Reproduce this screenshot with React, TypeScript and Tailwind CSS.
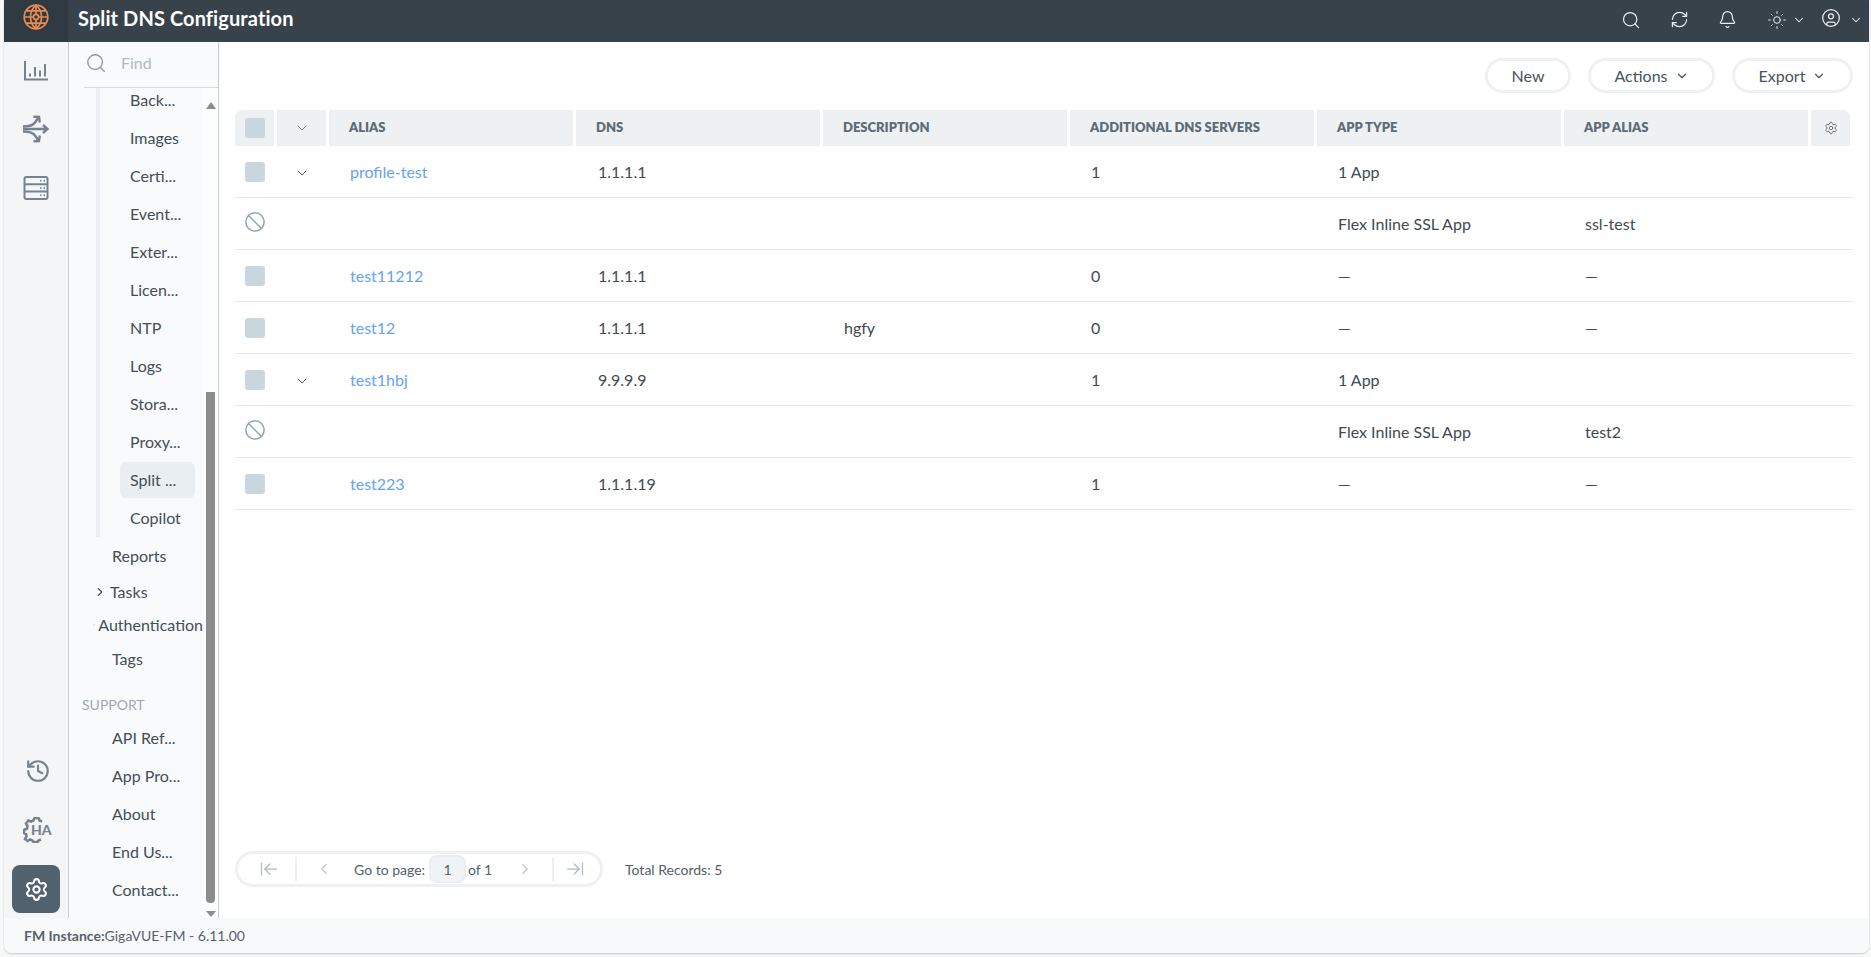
import {
  ArrowLeftToLine,
  ArrowRightToLine,
  Ban,
  Bell,
  ChevronDown,
  ChevronLeft,
  ChevronRight,
  CircleUser,
  History,
  RefreshCw,
  Search,
  Settings,
  Sun,
} from "lucide-react";

const gridCols = "grid grid-cols-[39px_49px_repeat(6,244px)_39px] gap-x-[3px]";

type Row = {
  kind: "row" | "sub";
  expand?: boolean;
  alias?: string;
  dns?: string;
  description?: string;
  servers?: string;
  appType?: string;
  appAlias?: string;
};

const rows: Row[] = [
  { kind: "row", expand: true, alias: "profile-test", dns: "1.1.1.1", servers: "1", appType: "1 App" },
  { kind: "sub", appType: "Flex Inline SSL App", appAlias: "ssl-test" },
  { kind: "row", alias: "test11212", dns: "1.1.1.1", servers: "0", appType: "—", appAlias: "—" },
  { kind: "row", alias: "test12", dns: "1.1.1.1", description: "hgfy", servers: "0", appType: "—", appAlias: "—" },
  { kind: "row", expand: true, alias: "test1hbj", dns: "9.9.9.9", servers: "1", appType: "1 App" },
  { kind: "sub", appType: "Flex Inline SSL App", appAlias: "test2" },
  { kind: "row", alias: "test223", dns: "1.1.1.19", servers: "1", appType: "—", appAlias: "—" },
];

const subItems = ["Back...", "Images", "Certi...", "Event...", "Exter...", "Licen...", "NTP", "Logs", "Stora...", "Proxy...", "Split ...", "Copilot"];
const supportItems = ["API Ref...", "App Pro...", "About", "End Us...", "Contact..."];

function GlobeLogo() {
  return (
    <svg width="26" height="26" viewBox="0 0 26 26" fill="none" stroke="#e98b52" strokeWidth="1.7">
      <circle cx="13" cy="13" r="11.8" />
      <path d="M13 1.2C8.5 5 7.5 9 7.5 13s1 8 5.5 11.8M13 1.2C17.5 5 18.5 9 18.5 13s-1 8-5.5 11.8" />
      <path d="M13 1.2V10M13 16v8.8M1.2 13H10M16 13h8.8M3.2 6.8h19.6M3.2 19.2h19.6" />
      <circle cx="13" cy="13" r="2.6" />
    </svg>
  );
}

function ChartIcon() {
  return (
    <svg width="26" height="22" viewBox="0 0 26 22" fill="none" stroke="#76838f">
      <path d="M2 1v18.5h23" strokeWidth="2" />
      <path d="M7 16.5v-3M12 16.5V7M17 16.5v-6M22 16.5V4" strokeWidth="2" />
    </svg>
  );
}

function RouteIcon() {
  return (
    <svg width="28" height="28" viewBox="0 0 28 28" fill="none" stroke="#76838f" strokeWidth="2.4">
      <path d="M1 14h24M21 10l4.5 4-4.5 4" />
      <path d="M1 11.5c7 0 10-1 12-4l3.5-5M11.5 1.8l5.5.2.8 5.5" />
      <path d="M1 16.500c7 0 10 1 12 4l3.500 5M11.500 26.200l5.500-.2.800-5.500" />
    </svg>
  );
}

function ServerIcon() {
  return (
    <svg width="26" height="24" viewBox="0 0 26 24" fill="none" stroke="#76838f" strokeWidth="2">
      <rect x="1.500" y="1" width="23" height="22" rx="2" />
      <path d="M1.500 8.300h23M1.500 15.600h23" />
      <path d="M17 4.700h1.500M20.500 4.700H22M17 12h1.500M20.500 12H22M17 19.300h1.500M20.500 19.300H22" strokeWidth="1.500" />
    </svg>
  );
}

function HaIcon() {
  return (
    <div className="relative w-[28px] h-[26px]">
      <svg width="26" height="26" viewBox="0 0 26 26" fill="none" stroke="#76838f" strokeWidth="2.600">
        <path d="M19 4.500l-2.500-1-1-2.500h-4l-1 2.500-2.500 1-2.500-1-2.500 3 1.500 2.500-.5 2.500L1 13v3l2 1 .5 2.500L2 22l2.500 2 2.500-1.500 2.500 1 1 1.500h4l1-1.500 2.500-1" />
      </svg>
      <span className="absolute left-[8px] top-[6px] text-[14px] leading-[14px] font-black text-[#76838f]">HA</span>
    </div>
  );
}

function TopBar() {
  return (
    <header className="flex h-[42px] shrink-0 items-center bg-[#37424a] text-[#e9edf0]">
      <div className="flex h-full w-[64px] items-start justify-center bg-[#2f3a42] pt-[4px]">
        <GlobeLogo />
      </div>
      <div className="pb-[6px] pl-[10px] text-[20px] font-bold tracking-[0.1px] text-white">Split DNS Configuration</div>
      <div className="ml-auto flex items-center pb-[3px]">
        <Search size={20} strokeWidth={1.500} className="mr-[29px]" />
        <RefreshCw size={19} strokeWidth={1.500} className="mr-[29px]" />
        <Bell size={19} strokeWidth={1.500} className="mr-[30px]" />
        <Sun size={20} strokeWidth={1.200} />
        <ChevronDown size={14} strokeWidth={1.800} className="ml-[5px] mr-[15px]" />
        <CircleUser size={20} strokeWidth={1.500} className="mb-[3px]" />
        <ChevronDown size={14} strokeWidth={1.800} className="ml-[8px] mr-[6px]" />
      </div>
    </header>
  );
}

function Rail() {
  return (
    <aside className="flex w-[65px] shrink-0 flex-col items-center border-r border-[#c9cccf] bg-[#f4f5f7]">
      <div className="flex h-[58px] w-full items-center justify-center"><ChartIcon /></div>
      <div className="flex h-[58px] w-full items-center justify-center"><RouteIcon /></div>
      <div className="flex h-[60px] w-full items-center justify-center"><ServerIcon /></div>
      <div className="mt-auto flex w-full flex-col items-center pb-[5px]">
        <div className="flex h-[59px] w-full items-center justify-center pl-[3px]">
          <History size={26} strokeWidth={2} className="text-[#76838f]" />
        </div>
        <div className="flex h-[59px] w-full items-center justify-center pl-[2px]"><HaIcon /></div>
        <div className="mt-[6px] flex h-[48px] w-[48px] items-center justify-center rounded-[8px] bg-[#52616e]">
          <Settings size={25} strokeWidth={2} className="text-white" />
        </div>
      </div>
    </aside>
  );
}

function NavPanel() {
  return (
    <nav className="flex w-[150px] shrink-0 flex-col border-r border-[#c9cccf] bg-[#f9fafc] text-[16px] text-[#434e57]">
      <div className="ml-[15px] flex h-[46px] shrink-0 items-center border-b border-[#d5d9dc] pb-[3px]">
        <Search size={22} strokeWidth={1.500} className="ml-[1px] text-[#8b9ba8]" />
        <span className="ml-[14px] text-[#aebac4]">Find</span>
      </div>
      <div className="flex min-h-0 flex-1">
        <div className="min-w-0 flex-1 overflow-hidden">
          <div className="-mt-[7px]">
            <div className="ml-[27px] border-l-4 border-[#e9eef2]">
              {subItems.map((label) => (
                <div key={label} className="flex h-[38px] items-center pl-[20px]">
                  <div className={`flex h-[36px] w-[75px] items-center rounded-[6px] pl-[10px] ${label === "Split ..." ? "bg-[#e9eef2]" : ""}`}>
                    {label}
                  </div>
                </div>
              ))}
            </div>
            <div className="flex h-[38px] items-center pl-[43px]">Reports</div>
            <div className="flex h-[34px] items-center whitespace-nowrap pl-[24px]">
              <ChevronRight size={14} strokeWidth={2} className="mr-[3px]" />
              Tasks
            </div>
            <div className="flex h-[31px] items-center whitespace-nowrap pl-[24px]">
              <ChevronRight size={14} strokeWidth={2} className="mr-[3px]" />
              Authentication
            </div>
            <div className="flex h-[37px] items-center pl-[43px]">Tags</div>
            <div className="flex h-[42px] items-end pb-[6px] pl-[13px] text-[14px] leading-[16px] text-[#9aa9b7]">SUPPORT</div>
            {supportItems.map((label) => (
              <div key={label} className="flex h-[38px] items-center pl-[43px]">{label}</div>
            ))}
          </div>
        </div>
        <div className="flex w-[15px] shrink-0 flex-col items-center bg-[#fcfdfd] pl-[3px] pr-[3px]">
          <div className="mt-[14px] h-0 w-0 border-x-[5px] border-b-[7px] border-x-transparent border-b-[#8c8c8c]" />
          <div className="mb-[8px] mt-auto h-[511px] w-[9px] rounded-b-[4px] bg-[#8c8c8c]" />
          <div className="mb-[1px] h-0 w-0 border-x-[5px] border-t-[6px] border-x-transparent border-t-[#8c8c8c]" />
        </div>
      </div>
    </nav>
  );
}

function PillButton({ label, caret, className }: { label: string; caret?: boolean; className: string }) {
  return (
    <div className={`flex h-[35px] items-center justify-center rounded-full border-[3px] border-[#edf1f4] text-[16px] text-[#46525c] ${className}`}>
      {label}
      {caret && <ChevronDown size={14} strokeWidth={2} className="ml-[7px]" />}
    </div>
  );
}

function Checkbox() {
  return <div className="h-[20px] w-[20px] rounded-[3px] bg-[#c9d6de]" />;
}

function DataTable() {
  const headers = ["ALIAS", "DNS", "DESCRIPTION", "ADDITIONAL DNS SERVERS", "APP TYPE", "APP ALIAS"];
  return (
    <div className="text-[16px] text-[#3f4a53]">
      <div className={`${gridCols} h-[36px]`}>
        <div className="flex items-center justify-center rounded-tl-[8px] bg-[#edf1f4]"><Checkbox /></div>
        <div className="flex items-center justify-center bg-[#edf1f4]">
          <ChevronDown size={16} strokeWidth={1} className="text-[#46525c]" />
        </div>
        {headers.map((h) => (
          <div key={h} className="flex items-center bg-[#edf1f4] pl-[20px] text-[13px] font-extrabold text-[#5f6b75]">{h}</div>
        ))}
        <div className="flex items-center justify-center rounded-tr-[8px] bg-[#edf1f4]">
          <Settings size={14} strokeWidth={1.500} className="text-[#5f6b75]" />
        </div>
      </div>
      {rows.map((row, i) => (
        <div key={i} className={`${gridCols} h-[52px] items-center border-b border-[#e4e8eb] pr-[3px]`}>
          <div className="flex justify-center">
            {row.kind === "sub" ? <Ban size={22} strokeWidth={1.700} className="-mt-[3px] text-[#8fa7ba]" /> : <Checkbox />}
          </div>
          <div className="flex justify-center pt-[3px]">
            {row.expand && <ChevronDown size={16} strokeWidth={1.300} className="text-[#2f3940]" />}
          </div>
          <div className="pl-[21px] text-[#65a2f2]">{row.alias}</div>
          <div className="pl-[22px]">{row.dns}</div>
          <div className="pl-[21px]">{row.description}</div>
          <div className="pl-[21px]">{row.servers}</div>
          <div className="pl-[21px]">{row.appType}</div>
          <div className="pl-[21px]">{row.appAlias}</div>
          <div />
        </div>
      ))}
    </div>
  );
}

function Pagination() {
  return (
    <div className="mb-[31px] mt-auto flex items-center text-[14px] text-[#525e68]">
      <div className="flex h-[36px] w-[368px] items-center rounded-full border-[3px] border-[#edf1f4]">
        <div className="flex h-[24px] w-[59px] items-center justify-center border-r-2 border-[#edf1f4] pl-[4px] text-[#aebbc6]">
          <ArrowLeftToLine size={20} strokeWidth={1.500} />
        </div>
        <ChevronLeft size={18} strokeWidth={1.500} className="ml-[18px] text-[#b9c4cd]" />
        <span className="ml-[21px]">Go to page:</span>
        <div className="ml-[4px] flex h-[28px] w-[37px] items-center justify-center rounded-[8px] border-2 border-[#e9eef2] bg-[#f0f3f6]">1</div>
        <span className="ml-[2px]">of 1</span>
        <ChevronRight size={18} strokeWidth={1.500} className="ml-[24px] text-[#b9c4cd]" />
        <div className="ml-[18px] flex h-[24px] flex-1 items-center justify-center border-l-2 border-[#edf1f4] pr-[4px] text-[#aebbc6]">
          <ArrowRightToLine size={20} strokeWidth={1.500} />
        </div>
      </div>
      <span className="ml-[22px]">Total Records: 5</span>
    </div>
  );
}

export default function App() {
  return (
    <div className="h-[957px] w-full overflow-hidden bg-[#f7f8f8] pb-[4px] pl-[4px] pr-[2px] font-['Lato',sans-serif]">
      <div className="flex h-full flex-col rounded-b-[8px] shadow-[0_1px_2px_rgba(0,0,0,0.2)]">
        <TopBar />
        <div className="flex min-h-0 flex-1">
          <Rail />
          <NavPanel />
          <main className="flex min-w-0 flex-1 flex-col bg-white pl-[16px] pr-[16px]">
            <div className="flex justify-end gap-[17px] pb-[17px] pt-[16px]">
              <PillButton label="New" className="w-[86px]" />
              <PillButton label="Actions" caret className="w-[127px]" />
              <PillButton label="Export" caret className="w-[121px]" />
            </div>
            <DataTable />
            <Pagination />
          </main>
        </div>
        <footer className="flex h-[35px] shrink-0 items-center rounded-b-[8px] bg-[#f8f9fb] pl-[20px] text-[14px] text-[#56626c]">
          <span className="font-bold">FM Instance:</span>
          <span>GigaVUE-FM - 6.11.00</span>
        </footer>
      </div>
    </div>
  );
}
